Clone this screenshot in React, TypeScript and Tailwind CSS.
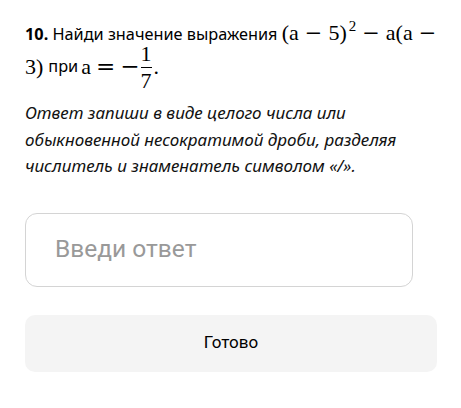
import React from "react";

const M: React.FC<{ children: React.ReactNode; className?: string }> = ({ children, className }) => (
  <span className={`[font-family:'Liberation_Serif',serif] text-[22px] ${className ?? ""}`}>{children}</span>
);

const Op: React.FC<{ children: React.ReactNode; className?: string }> = ({ children, className }) => (
  <span className={`[font-family:'DejaVu_Serif',serif] text-[21px] font-light ${className ?? "mx-[6px]"}`}>{children}</span>
);

export default function App() {
  return (
    <div className="w-[461px] h-[408px] bg-white text-black [font-family:'Noto_Sans',sans-serif]">
      <div className="pl-[25px] pr-[20px] pt-[17px]">
        <div className="text-[16.3px] leading-[31px]">
          <div className="whitespace-nowrap">
            <span className="font-bold">10.</span> Найди значение выражения{" "}
            <M>(a</M>
            <Op>−</Op>
            <M>5)</M>
            <span className="inline-block [font-family:'Liberation_Serif',serif] text-[15px] leading-none relative -top-[9px] ml-[2px]">2</span>
            <Op>−</Op>
            <M>a(a</M>
            <Op className="ml-[6px]">−</Op>
          </div>
          <div className="flex items-center h-[30px] mt-[1px]">
            <M>3)</M>
            <span className="ml-[5px]">при</span>
            <M className="ml-[3px]">a</M>
            <Op className="mx-[5px] text-[23px]">=</Op>
            <Op className="mx-0 text-[23px]">−</Op>
            <span className="inline-flex flex-col items-center mx-[1px] relative top-[1px] [font-family:'Liberation_Serif',serif] text-[22px] leading-[17px]">
              <span>1</span>
              <span className="w-[11px] h-[1px] bg-black mt-[5px] mb-[4px]"></span>
              <span>7</span>
            </span>
            <M className="ml-[1px]">.</M>
          </div>
        </div>
        <p className="mt-[19px] italic text-[17px] leading-[26.5px] text-[#111]">
          Ответ запиши в виде целого числа или обыкновенной несократимой дроби, разделяя числитель и знаменатель символом «/».
        </p>
        <div className="mt-[33px] w-[388px] h-[74px] rounded-[12px] border border-[#d4d4d4] flex items-center pl-[29px] [font-family:Roboto,sans-serif] text-[24.5px] text-[#999]">
          Введи ответ
        </div>
        <button className="mt-[28px] w-[412px] h-[57px] rounded-[10px] bg-[#f4f4f4] flex items-center justify-center [font-family:Roboto,sans-serif] text-[17px] text-black">
          Готово
        </button>
      </div>
    </div>
  );
}
